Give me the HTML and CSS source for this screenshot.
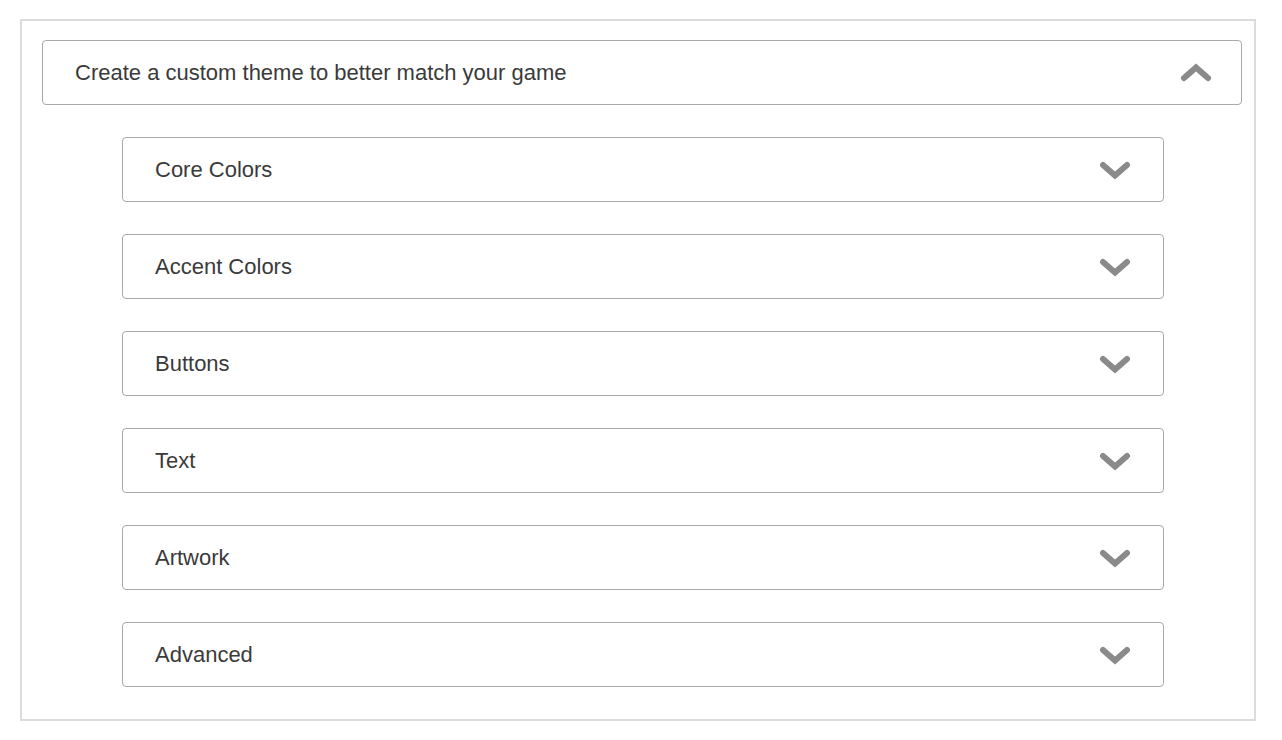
FILE: index.html
```html
<!DOCTYPE html>
<html>
<head>
<meta charset="utf-8">
<link rel="stylesheet" href="styles.css">
</head>
<body>
<div class="panel">
  <div class="acc acc-main">
    <span class="label">Create a custom theme to better match your game</span>
    <svg class="chev" width="32" height="20" viewBox="0 0 32 20"><polyline points="4,15 16,4.5 28,15" fill="none" stroke="#8a8a8a" stroke-width="6" stroke-linecap="round" stroke-linejoin="miter"/></svg>
  </div>
  <div class="sub-list">
    <div class="acc"><span class="label">Core Colors</span><svg class="chev" width="32" height="20" viewBox="0 0 32 20"><polyline points="4,5 16,15.5 28,5" fill="none" stroke="#8a8a8a" stroke-width="6" stroke-linecap="round" stroke-linejoin="miter"/></svg></div>
    <div class="acc"><span class="label">Accent Colors</span><svg class="chev" width="32" height="20" viewBox="0 0 32 20"><polyline points="4,5 16,15.5 28,5" fill="none" stroke="#8a8a8a" stroke-width="6" stroke-linecap="round" stroke-linejoin="miter"/></svg></div>
    <div class="acc"><span class="label">Buttons</span><svg class="chev" width="32" height="20" viewBox="0 0 32 20"><polyline points="4,5 16,15.5 28,5" fill="none" stroke="#8a8a8a" stroke-width="6" stroke-linecap="round" stroke-linejoin="miter"/></svg></div>
    <div class="acc"><span class="label">Text</span><svg class="chev" width="32" height="20" viewBox="0 0 32 20"><polyline points="4,5 16,15.5 28,5" fill="none" stroke="#8a8a8a" stroke-width="6" stroke-linecap="round" stroke-linejoin="miter"/></svg></div>
    <div class="acc"><span class="label">Artwork</span><svg class="chev" width="32" height="20" viewBox="0 0 32 20"><polyline points="4,5 16,15.5 28,5" fill="none" stroke="#8a8a8a" stroke-width="6" stroke-linecap="round" stroke-linejoin="miter"/></svg></div>
    <div class="acc"><span class="label">Advanced</span><svg class="chev" width="32" height="20" viewBox="0 0 32 20"><polyline points="4,5 16,15.5 28,5" fill="none" stroke="#8a8a8a" stroke-width="6" stroke-linecap="round" stroke-linejoin="miter"/></svg></div>
  </div>
</div>
</body>
</html>
```
FILE: styles.css
```css
html, body {
  margin: 0;
  padding: 0;
  background: #fff;
}
body {
  padding: 19px 0 0 20px;
  font-family: "Liberation Sans", Arial, sans-serif;
  color: #3a3a3a;
}
.panel {
  box-sizing: border-box;
  width: 1236px;
  height: 702px;
  border: 2px solid #dcdcdc;
  padding: 19px 12px 0 20px;
}
.acc {
  box-sizing: border-box;
  height: 65px;
  border: 1px solid #a9a9a9;
  border-radius: 4px;
  display: flex;
  align-items: center;
  justify-content: space-between;
  padding: 0 32px 0 32px;
  font-size: 22px;
}
.acc-main {
  padding: 0 29px 0 32px;
}
.sub-list {
  margin: 32px 78px 0 80px;
  display: flex;
  flex-direction: column;
  gap: 32px;
}
.label {
  line-height: 1;
}
.chev {
  display: block;
}
```
